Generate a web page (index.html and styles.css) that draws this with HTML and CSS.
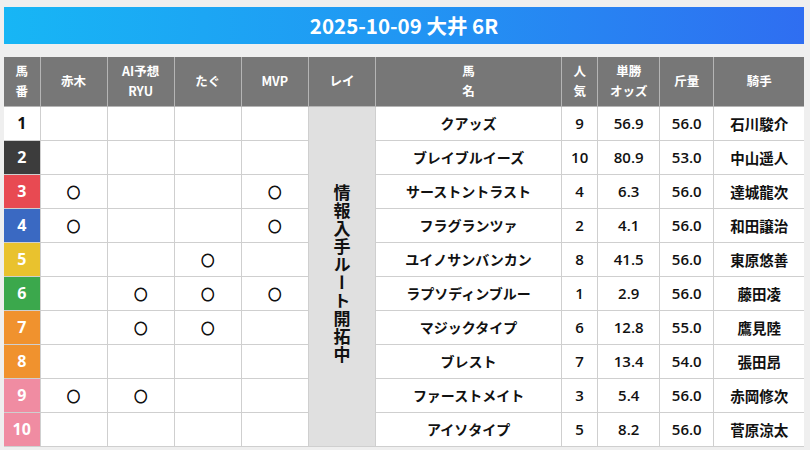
FILE: index.html
```html
<!DOCTYPE html>
<html lang="ja">
<head>
<meta charset="utf-8">
<link rel="stylesheet" href="styles.css">
</head>
<body>
<div class="page">
  <div class="title">2025-10-09 大井 6R</div>
  <table class="race">
    <colgroup>
      <col class="c-num"><col class="c-mark"><col class="c-mark"><col class="c-mark"><col class="c-mark"><col class="c-mark">
      <col class="c-name"><col class="c-pop"><col class="c-odds"><col class="c-wt"><col class="c-jockey">
    </colgroup>
    <thead>
      <tr>
        <th>馬<br>番</th><th>赤木</th><th>AI予想<br>RYU</th><th>たぐ</th><th>MVP</th><th>レイ</th>
        <th>馬<br>名</th><th>人<br>気</th><th>単勝<br>オッズ</th><th>斤量</th><th>騎手</th>
      </tr>
    </thead>
    <tbody>
      <tr><td class="num w1">1</td><td></td><td></td><td></td><td></td>
        <td class="rei" rowspan="10"><span class="vert">情報入手ルート開拓中</span></td>
        <td class="name">クアッズ</td><td class="n">9</td><td class="n">56.9</td><td class="n">56.0</td><td class="jk">石川駿介</td></tr>
      <tr><td class="num w2">2</td><td></td><td></td><td></td><td></td>
        <td class="name">ブレイブルイーズ</td><td class="n">10</td><td class="n">80.9</td><td class="n">53.0</td><td class="jk">中山遥人</td></tr>
      <tr><td class="num w3">3</td><td class="mk">○</td><td></td><td></td><td class="mk">○</td>
        <td class="name">サーストントラスト</td><td class="n">4</td><td class="n">6.3</td><td class="n">56.0</td><td class="jk">達城龍次</td></tr>
      <tr><td class="num w4">4</td><td class="mk">○</td><td></td><td></td><td class="mk">○</td>
        <td class="name">フラグランツァ</td><td class="n">2</td><td class="n">4.1</td><td class="n">56.0</td><td class="jk">和田譲治</td></tr>
      <tr><td class="num w5">5</td><td></td><td></td><td class="mk">○</td><td></td>
        <td class="name">ユイノサンバンカン</td><td class="n">8</td><td class="n">41.5</td><td class="n">56.0</td><td class="jk">東原悠善</td></tr>
      <tr><td class="num w6">6</td><td></td><td class="mk">○</td><td class="mk">○</td><td class="mk">○</td>
        <td class="name">ラプソディンブルー</td><td class="n">1</td><td class="n">2.9</td><td class="n">56.0</td><td class="jk">藤田凌</td></tr>
      <tr><td class="num w7">7</td><td></td><td class="mk">○</td><td class="mk">○</td><td></td>
        <td class="name">マジックタイプ</td><td class="n">6</td><td class="n">12.8</td><td class="n">55.0</td><td class="jk">鷹見陸</td></tr>
      <tr><td class="num w7">8</td><td></td><td></td><td></td><td></td>
        <td class="name">ブレスト</td><td class="n">7</td><td class="n">13.4</td><td class="n">54.0</td><td class="jk">張田昂</td></tr>
      <tr><td class="num w9">9</td><td class="mk">○</td><td class="mk">○</td><td></td><td></td>
        <td class="name">ファーストメイト</td><td class="n">3</td><td class="n">5.4</td><td class="n">56.0</td><td class="jk">赤岡修次</td></tr>
      <tr><td class="num w9">10</td><td></td><td></td><td></td><td></td>
        <td class="name">アイソタイプ</td><td class="n">5</td><td class="n">8.2</td><td class="n">56.0</td><td class="jk">菅原涼太</td></tr>
    </tbody>
  </table>
</div>
</body>
</html>
```
FILE: styles.css
```css
html, body {
  margin: 0;
  padding: 0;
}
body {
  background: #efefef;
  font-family: "Noto Sans CJK JP", "Noto Sans", sans-serif;
  color: #111;
}
.page {
  padding: 7px 6px 0 4px;
  display: flex;
  flex-direction: column;
  gap: 13px;
}
.title {
  height: 37px;
  line-height: 37px;
  text-align: center;
  color: #fff;
  font-weight: 700;
  font-size: 20.5px;
  background: linear-gradient(90deg, #17b6f5 0%, #2196f3 50%, #2f6ef1 100%);
}
.race {
  width: 800px;
  border-collapse: collapse;
  table-layout: fixed;
  background: #fff;
}
.c-num { width: 36px; }
.c-mark { width: 67px; }
.c-name { width: 186px; }
.c-pop { width: 36px; }
.c-odds { width: 62px; }
.c-wt { width: 54px; }
.c-jockey { width: 90px; }

.race thead tr { height: 49px; }
.race tbody tr { height: 34px; }
.race th {
  background: #777;
  color: #fff;
  font-weight: 700;
  font-size: 12.5px;
  line-height: 20px;
  padding: 0;
  border: 1px solid #b5b5b5;
  border-top: none;
}
.race th:first-child { border-left: none; }
.race th:last-child { border-right: none; }
.race td {
  padding: 0;
  border: 1px solid #cfcfcf;
  text-align: center;
  font-weight: 700;
  font-size: 14px;
}
.race td.num {
  font-size: 16px;
  color: #fff;
  border-left: none;
  font-family: "Open Sans", "Noto Sans", sans-serif;
  font-weight: 700;
}
.race td.num.w1 { background: #fff; color: #111; }
.w2 { background: #3c3c3c; }
.w3 { background: #e84a52; }
.w4 { background: #3a69c2; }
.w5 { background: #e9c22e; }
.w6 { background: #3ba84c; }
.w7 { background: #f0922e; }
.w9 { background: #f08ca2; }
.race td.mk {
  font-size: 13px;
  font-weight: 400;
  -webkit-text-stroke: 0.9px #111;
}
.race td.rei {
  background: #e0e0e0;
  vertical-align: middle;
}
.vert {
  writing-mode: vertical-rl;
  font-size: 17px;
  font-weight: 700;
  line-height: 1;
  letter-spacing: 1px;
  color: #111;
}
.race td.name { font-size: 14px; }
.race td.n {
  font-family: "Open Sans", "Noto Sans", sans-serif;
  font-size: 15px;
  font-weight: 600;
}
.race td.jk { font-size: 14.5px; border-right: none; }
```
